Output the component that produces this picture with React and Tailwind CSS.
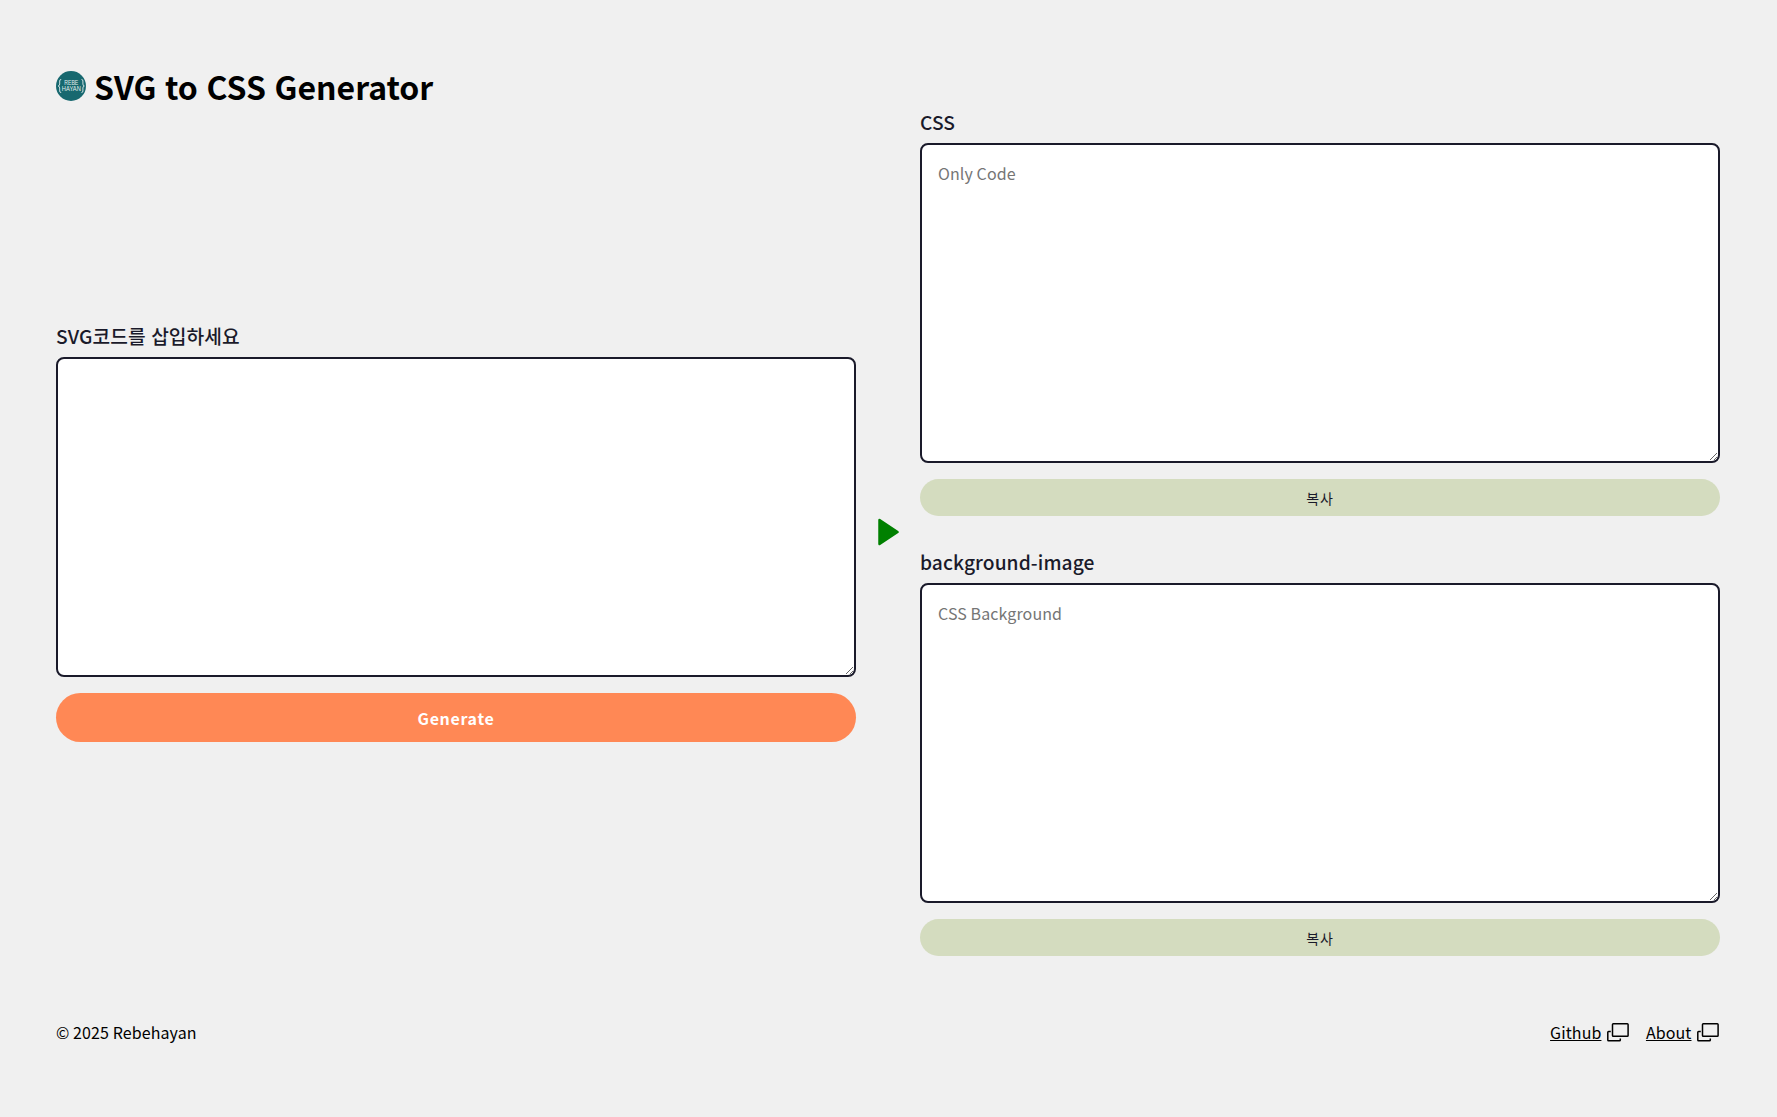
const area = "block w-full h-[320px] resize rounded-lg border-2 border-[#1a1a2a] bg-white p-4 text-[16px] leading-[24px] tracking-[0.1px] placeholder:text-[#757575]";

function Field({ label, placeholder, children }) {
  return (
    <div>
      <label className="block h-[34px] text-[19.2px] leading-[26px] font-medium text-[#1a1a2a] tracking-[0.08px] [word-spacing:1px]">{label}</label>
      <textarea className={area} placeholder={placeholder} />
      {children}
    </div>
  );
}

function Copy() {
  return <button className="mt-4 block h-[37px] w-full rounded-full bg-[#d4dcbf] pt-px text-[14px] tracking-[0.8px] text-[#1a1a2a]">복사</button>;
}

function Win() {
  return (
    <svg width="22" height="19" viewBox="0 0 22 19" fill="none" stroke="black" strokeWidth="1.5" strokeLinejoin="round">
      <rect x="5.500" y="0.800" width="15.600" height="12.500" rx="0.800" />
      <path d="M3.800 8.500H1.600Q0.800 8.500 0.800 9.300V16.900Q0.800 17.700 1.600 17.700H12.500Q13.300 17.700 13.300 16.900V15.500" />
    </svg>
  );
}

function Logo() {
  return (
    <svg className="mb-[11px]" width="30" height="30" viewBox="0 0 30 30">
      <circle cx="15" cy="15" r="15" fill="#17686f" />
      <g fill="#e2eeee" fontFamily="Liberation Sans" fontSize="7" textAnchor="middle">
        <text x="15.300" y="14" textLength="14" lengthAdjust="spacingAndGlyphs">REBE</text>
        <text x="15.300" y="20.300" textLength="19" lengthAdjust="spacingAndGlyphs">HAYAN</text>
      </g>
      <path d="M5.200 8.500H4.900Q3.700 8.500 3.700 10V13Q3.700 14.700 2.200 15Q3.700 15.300 3.700 17V20Q3.700 21.500 4.900 21.500H5.200M25.400 8.500H25.700Q26.900 8.500 26.900 10V13Q26.900 14.700 28.300 15Q26.900 15.300 26.900 17V20Q26.900 21.500 25.700 21.500H25.400" fill="none" stroke="#e2eeee" strokeWidth="0.900" />
    </svg>
  );
}

export default function App() {
  return (
    <div className="flex h-[1117px] flex-col bg-[#f0f0f0] px-14 font-['Noto_Sans_CJK_KR',sans-serif] text-black">
      <header className="flex h-[112px] items-end gap-2">
        <Logo />
        <h1 className="text-[32px] leading-[52px] font-bold [word-spacing:1.4px]">SVG to CSS Generator</h1>
      </header>
      <main className="flex h-[845px] items-center">
        <section className="w-[800px] pb-1">
          <Field label="SVG코드를 삽입하세요">
            <button className="mt-4 block h-[49px] w-full rounded-full bg-[#ff8855] text-[16px] font-bold tracking-[0.65px] text-white">Generate</button>
          </Field>
        </section>
        <div className="flex w-16 justify-center pb-[5px]">
          <svg width="22" height="28" viewBox="0 0 22 28">
            <path d="M2.500 2L20.500 14L2.500 26z" fill="green" stroke="green" strokeWidth="2.500" strokeLinejoin="round" />
          </svg>
        </div>
        <section className="flex w-[800px] flex-col gap-[33px] pb-1">
          <Field label="CSS" placeholder="Only Code"><Copy /></Field>
          <Field label="background-image" placeholder="CSS Background"><Copy /></Field>
        </section>
      </main>
      <footer className="mt-[63px] flex justify-between tracking-[0.1px]">
        <p>© 2025 Rebehayan</p>
        <div className="flex gap-[17px] pr-0.5">
          <a className="flex items-center gap-[5.500px]"><span className="underline">Github</span><Win /></a>
          <a className="flex items-center gap-[5.500px]"><span className="underline">About</span><Win /></a>
        </div>
      </footer>
    </div>
  );
}
